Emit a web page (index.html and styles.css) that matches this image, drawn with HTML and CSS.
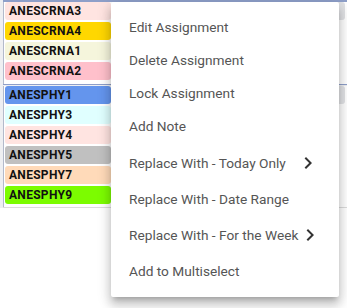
FILE: index.html
```
<!DOCTYPE html>
<html lang="en">
<head>
    <meta charset="UTF-8">
    <title>Assignments</title>
    <link rel="stylesheet" href="styles.css">
</head>
<body>
    <div class="sheet">
        <!-- CRNA row -->
        <div class="row row-first">
            <div class="cell">
                <div class="chip c-misty">ANESCRNA3</div>
                <div class="chip c-gold">ANESCRNA4</div>
                <div class="chip c-beige">ANESCRNA1</div>
                <div class="chip c-pink">ANESCRNA2</div>
            </div>
            <div class="cell"></div>
            <div class="cell"></div>
            <div class="cell"><div class="chip c-grey"></div></div>
        </div>

        <!-- PHY row -->
        <div class="row row-second">
            <div class="cell">
                <div class="chip c-blue">ANESPHY1</div>
                <div class="chip c-cyan">ANESPHY3</div>
                <div class="chip c-misty">ANESPHY4</div>
                <div class="chip c-silver">ANESPHY5</div>
                <div class="chip c-peach">ANESPHY7</div>
                <div class="chip c-green">ANESPHY9</div>
            </div>
            <div class="cell"></div>
            <div class="cell"></div>
            <div class="cell"><div class="chip c-grey"></div></div>
        </div>
    </div>

    <!-- context menu -->
    <ul class="menu">
        <li class="menu-item">Edit Assignment</li>
        <li class="menu-item">Delete Assignment</li>
        <li class="menu-item">Lock Assignment</li>
        <li class="menu-item">Add Note</li>
        <li class="menu-item tall first-tall"><span>Replace With - Today Only</span>
            <svg class="chevron" viewBox="0 0 24 24"><path d="M10 6L8.59 7.41 13.17 12l-4.58 4.59L10 18l6-6z"/></svg>
        </li>
        <li class="menu-item tall"><span>Replace With - Date Range</span></li>
        <li class="menu-item tall"><span>Replace With - For the Week</span>
            <svg class="chevron" viewBox="0 0 24 24"><path d="M10 6L8.59 7.41 13.17 12l-4.58 4.59L10 18l6-6z"/></svg>
        </li>
        <li class="menu-item tall"><span>Add to Multiselect</span></li>
    </ul>
</body>
</html>
```

FILE: styles.css
```
body {
    margin: 0;
    background: #fff;
    font-family: Roboto, "Liberation Sans", sans-serif;
}

/* grid of day cells */
.sheet {
    background: #eeeff2;
}

.row {
    display: grid;
    grid-template-columns: 110px 110px 110px 1fr;
    margin-left: 3px;
}

.row-first {
    border-top: 2px solid #8e9fc9;
}

.row-second {
    border-top: 1px solid #8e9fc9;
    border-bottom: 1px solid #dcdcdc;
    padding-top: 1px;
}

.cell {
    background: #fff;
    border-left: 1px solid #b3bacb;
    padding: 0 2px 2px 1px;
}

.row-second .cell {
    padding-bottom: 1px;
}

/* assignment chips */
.chip {
    height: 18px;
    line-height: 19px;
    margin-bottom: 2px;
    padding-left: 4px;
    border-radius: 3px;
    font-size: 12px;
    font-weight: bold;
    letter-spacing: 0.3px;
    color: #111;
}

.c-misty { background: #ffe4e1; }
.c-gold { background: #ffd700; }
.c-beige { background: #f5f5dc; }
.c-pink { background: #ffc0cb; }
.c-blue { background: #6495ed; }
.c-cyan { background: #e0ffff; }
.c-silver { background: #c0c0c0; }
.c-peach { background: #ffdab9; }
.c-green { background: #7cfc00; }
.c-grey { background: #e2e3e6; }

/* context menu */
.menu {
    position: absolute;
    top: 2px;
    left: 111px;
    width: 228px;
    margin: 0;
    padding: 8px 0;
    list-style: none;
    background: #fff;
    border-radius: 2px;
    box-shadow: 0 5px 5px -3px rgba(0,0,0,0.2),
        0 8px 10px 1px rgba(0,0,0,0.14),
        0 3px 14px 2px rgba(0,0,0,0.12);
}

.menu-item {
    display: flex;
    align-items: center;
    height: 33px;
    padding: 0 18px;
    font-size: 13.7px;
    color: #555;
    white-space: nowrap;
    cursor: pointer;
}

.menu-item.tall {
    height: 36px;
}

.menu-item.first-tall {
    margin-top: 3px;
}

.chevron {
    flex-shrink: 0;
    width: 24px;
    height: 24px;
    margin-left: auto;
    margin-right: 1px;
    fill: #333;
}
```
